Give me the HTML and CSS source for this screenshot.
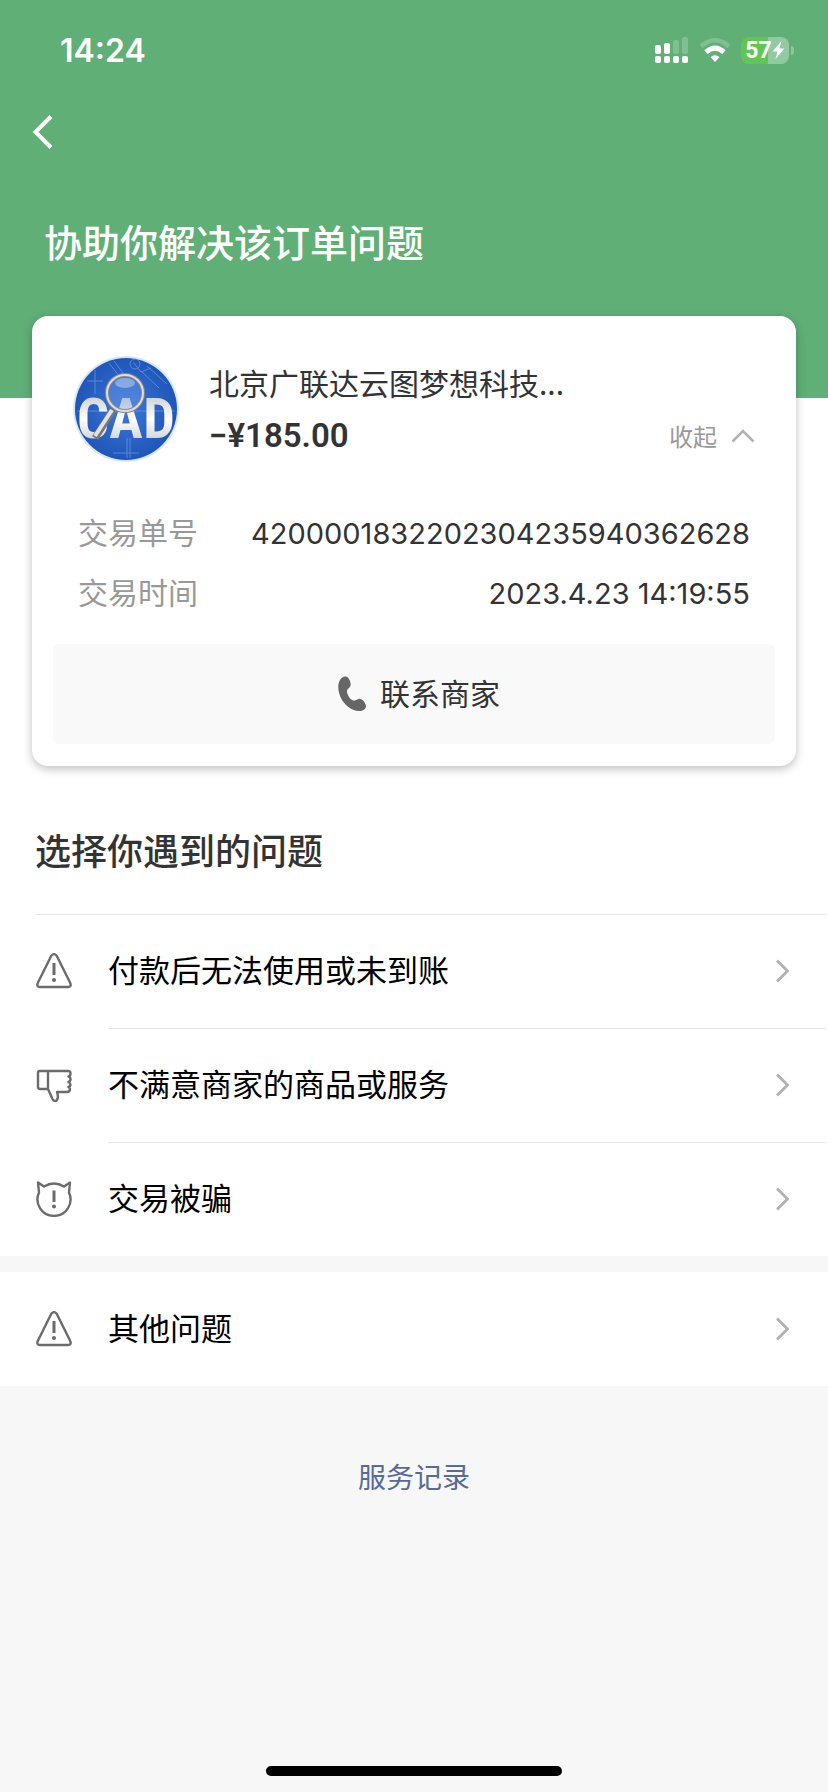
FILE: index.html
```html
<!DOCTYPE html>
<html lang="zh-CN">
<head>
    <meta charset="UTF-8">
    <meta name="viewport" content="width=device-width, initial-scale=1.0">
    <title>协助你解决该订单问题</title>
    <link rel="stylesheet" href="styles.css">
</head>
<body>
    <header class="header">
        <div class="status-bar">
            <span class="time">14:24</span>
            <div class="status-icons">
                <svg class="signal" width="34" height="27" viewBox="0 0 34 27" fill="#fff">
                    <rect x="0" y="8" width="6" height="9" rx="2"/>
                    <rect x="9" y="6" width="6" height="11" rx="2"/>
                    <rect x="18" y="3" width="6" height="14" rx="2" opacity=".2"/>
                    <rect x="27" y="0" width="6" height="17" rx="2" opacity=".2"/>
                    <rect x="0" y="19" width="6" height="7" rx="2"/>
                    <rect x="9" y="19" width="6" height="7" rx="2"/>
                    <rect x="18" y="19" width="6" height="7" rx="2"/>
                    <rect x="27" y="19" width="6" height="7" rx="2"/>
                </svg>
                <svg class="wifi" width="32" height="25" viewBox="0 0 32 25">
                    <path d="M2 8.5Q16-4 30 8.500" fill="none" stroke="#fff" stroke-width="4.500" opacity=".2"/>
                    <path d="M7 14.200Q16 6 25 14.200" fill="none" stroke="#fff" stroke-width="5"/>
                    <path d="M11.500 19Q16 15.500 20.500 19L16 24Z" fill="#fff"/>
                </svg>
                <div class="battery">
                    <span class="battery-level">57</span>
                    <svg width="13" height="18" viewBox="0 0 12 18"><path d="M9 0L0 10.500H5L3 18L12 7.500H7Z" fill="#fff"/></svg>
                </div>
            </div>
        </div>
        <button class="back" aria-label="返回">
            <svg width="22" height="36" viewBox="0 0 22 36"><path d="M19 2.500L3.500 18L19 33.500" fill="none" stroke="#fff" stroke-width="4"/></svg>
        </button>
        <h1>协助你解决该订单问题</h1>
    </header>

    <main>
        <section class="card">
            <div class="merchant">
                <svg class="avatar" width="106" height="106" viewBox="0 0 106 106">
                    <defs>
                        <linearGradient id="silver" x1="0" y1="0" x2="0" y2="1">
                            <stop offset="0" stop-color="#b9bcc1"/>
                            <stop offset=".5" stop-color="#fff"/>
                            <stop offset=".75" stop-color="#dcdddf"/>
                            <stop offset="1" stop-color="#a9a9ab"/>
                        </linearGradient>
                        <radialGradient id="blue">
                            <stop offset="0" stop-color="#3c78da"/>
                            <stop offset="1" stop-color="#1f56b8"/>
                        </radialGradient>
                    </defs>
                    <circle cx="53" cy="53" r="53" fill="#d9e7fa"/>
                    <circle cx="53" cy="53" r="51" fill="url(#blue)"/>
                    <g fill="none" stroke="#79a7ef" opacity=".6">
                        <path d="M4 55H102M40 97H66M54 82V102M57 82V102M36 7L46 20M41 5L50 17M60 6L68 16L78 12M74 10L94 28M68 15L86 32M14 25H30M22 14V38"/>
                        <circle cx="62" cy="8" r="5"/>
                    </g>
                    <g class="avatar-text" fill="url(#silver)">
                        <text x="20" y="82">C</text>
                        <text x="53" y="82">A</text>
                        <text x="86" y="82">D</text>
                    </g>
                    <path d="M40 54L22 82" stroke="#777" stroke-width="7"/>
                    <path d="M39 54L22 80" stroke="#e2e2e2" stroke-width="4"/>
                    <circle cx="52" cy="37" r="18" fill="#79a7ef" fill-opacity=".35" stroke="#888" stroke-width="4"/>
                    <circle cx="52" cy="37" r="18" fill="none" stroke="#ddd" stroke-width="2"/>
                    <ellipse cx="52" cy="27" rx="10" ry="5" fill="#fff" opacity=".35"/>
                </svg>
                <div class="merchant-info">
                    <div class="merchant-name">北京广联达云图梦想科技...</div>
                    <div class="amount-row">
                        <span class="amount">−¥185.00</span>
                        <button class="collapse">收起
                            <svg width="24" height="15" viewBox="0 0 24 15"><path d="M1.500 13.500L12 3L22.500 13.500" fill="none" stroke="#b2b2b2" stroke-width="2.500"/></svg>
                        </button>
                    </div>
                </div>
            </div>
            <dl class="details">
                <div class="detail">
                    <dt>交易单号</dt>
                    <dd>4200001832202304235940362628</dd>
                </div>
                <div class="detail">
                    <dt>交易时间</dt>
                    <dd>2023.4.23 14:19:55</dd>
                </div>
            </dl>
            <button class="contact">
                <svg width="28" height="36" viewBox="0 0 28 36"><path d="M6.500 .5C9 0 11 2 12 5C13 8 13 10 11 12C9 13.500 8.500 15 9.500 18C11 22 14 25 17 24.500C19 24 20 22.500 22 22.800C25 23.500 27.500 27 28 30C28 33 25 35 21 35C14 35 6 29 2.500 21C0 15 -.5 9 1.500 5C2.500 2.500 4.500 .8 6.500 .5Z" fill="#666"/></svg>
                <span class="contact-text">联系商家</span>
            </button>
        </section>

        <h2>选择你遇到的问题</h2>
        <nav class="issues">
            <a class="issue" href="#unpaid">
                <svg class="issue-icon" width="36" height="36" viewBox="0 0 36 36"><use href="#icon-warning"/></svg>
                <span class="issue-text">付款后无法使用或未到账</span>
                <svg class="arrow" width="13" height="24" viewBox="0 0 13 24"><use href="#icon-arrow"/></svg>
            </a>
            <a class="issue" href="#unsatisfied">
                <svg class="issue-icon" width="36" height="36" viewBox="0 0 36 36">
                    <path d="M3.500 4H32Q34.500 4 34.500 6.500Q34.500 9 32.500 9.500Q35 10.500 34.500 13Q34 14.500 32.500 15Q34.500 16 34.500 18Q34 19.500 32.500 20Q34 21 34 22Q34 25 31 25H21C22.500 29 22 34 19 34C17.500 34 17 33 16.500 32L12 22H4Q2 22 2 20V6Q2 4 3.500 4ZM12 4V22"/>
                </svg>
                <span class="issue-text">不满意商家的商品或服务</span>
                <svg class="arrow" width="13" height="24" viewBox="0 0 13 24"><use href="#icon-arrow"/></svg>
            </a>
            <a class="issue" href="#fraud">
                <svg class="issue-icon" width="36" height="36" viewBox="0 0 36 36">
                    <path d="M2 1.500L8 5.500Q18-.5 28 5.500L34 1.500L33 11.500A16.500 16.500 0 1 1 3 11.500Z"/>
                    <path d="M18 9.500V21" stroke-width="3"/>
                    <circle class="dot" cx="18" cy="25.500" r="2"/>
                </svg>
                <span class="issue-text">交易被骗</span>
                <svg class="arrow" width="13" height="24" viewBox="0 0 13 24"><use href="#icon-arrow"/></svg>
            </a>
        </nav>
        <nav class="issues issues-other">
            <a class="issue" href="#other">
                <svg class="issue-icon" width="36" height="36" viewBox="0 0 36 36"><use href="#icon-warning"/></svg>
                <span class="issue-text">其他问题</span>
                <svg class="arrow" width="13" height="24" viewBox="0 0 13 24"><use href="#icon-arrow"/></svg>
            </a>
        </nav>
    </main>

    <footer class="footer">
        <a class="records" href="#records">服务记录</a>
        <div class="home-indicator"></div>
    </footer>

    <!-- shared icons -->
    <svg class="sprite" width="0" height="0">
        <symbol id="icon-warning" viewBox="0 0 36 36">
            <path d="M15.300 2.800Q18-.5 20.700 2.800L34 29.500Q36 34 32 34H4Q0 34 2 29.500Z"/>
            <path d="M18 10V22" stroke-width="3"/>
            <circle class="dot" cx="18" cy="27" r="2"/>
        </symbol>
        <symbol id="icon-arrow" viewBox="0 0 13 24">
            <path d="M1 1.500L11.500 12L1 22.500"/>
        </symbol>
    </svg>
</body>
</html>
```

FILE: styles.css
```css
* {
    box-sizing: border-box;
}
body {
    margin: 0;
    min-height: 100vh;
    display: flex;
    flex-direction: column;
    font-family: "Noto Sans CJK SC", sans-serif;
    color: #333;
    background-color: #f7f7f7;
}
button {
    border: none;
    padding: 0;
    background: none;
    font-family: inherit;
    cursor: pointer;
}
a {
    text-decoration: none;
}
svg {
    display: block;
    flex-shrink: 0;
}
.header {
    height: 398px;
    background-color: #60af77;
    color: #fff;
}
.status-bar {
    display: flex;
    justify-content: space-between;
    align-items: center;
    height: 100px;
    padding: 0 34px 0 60px;
}
.time {
    font-family: Inter, sans-serif;
    font-size: 32px;
    font-weight: 600;
}
.status-icons {
    display: flex;
    align-items: center;
    gap: 10px;
}
.battery {
    position: relative;
    display: flex;
    align-items: center;
    justify-content: center;
    width: 48px;
    height: 27px;
    margin-right: 5px;
    border-radius: 8px;
    background: linear-gradient(to right, #61c654 57%, #91c9a0 57%);
}
.battery::after {
    content: "";
    position: absolute;
    right: -5px;
    top: 9px;
    width: 3px;
    height: 9px;
    border-radius: 0 3px 3px 0;
    background-color: #8cc69b;
}
.battery-level {
    font-family: Roboto, sans-serif;
    font-size: 23px;
    font-weight: 700;
    line-height: 27px;
}
.back {
    display: block;
    margin: 14px 0 0 32px;
}
h1 {
    margin: 63px 0 0;
    padding: 0 44px;
    font-size: 38px;
    font-weight: 500;
    line-height: 56px;
}
main {
    background-color: #fff;
}
.card {
    position: relative;
    margin: -82px 32px 0;
    padding: 40px 21px 22px;
    border-radius: 16px;
    background-color: #fff;
    box-shadow: 0 3px 10px rgba(0, 0, 0, 0.25);
}
.merchant {
    display: flex;
    gap: 30px;
    padding: 0 20px;
}
.avatar-text {
    font-family: "Roboto Condensed", "Liberation Sans Narrow", Roboto, sans-serif;
    font-size: 56px;
    font-weight: 700;
    text-anchor: middle;
}
.merchant-info {
    flex: 1;
    min-width: 0;
    padding-top: 4px;
}
.merchant-name {
    font-size: 30px;
    line-height: 44px;
}
.amount-row {
    display: flex;
    justify-content: space-between;
    align-items: center;
    height: 62px;
}
.amount {
    font-family: Roboto, sans-serif;
    font-size: 33px;
    font-weight: 600;
}
.collapse {
    display: flex;
    align-items: center;
    gap: 14px;
    font-size: 24px;
    color: #999;
}
.details {
    margin: 35px 0 23px;
    padding: 0 25px;
}
.detail {
    display: flex;
    justify-content: space-between;
    align-items: baseline;
    font-size: 30px;
    line-height: 60px;
}
.detail dt {
    color: #999;
}
.detail dd {
    margin: 0;
    font-family: Inter, sans-serif;
    font-size: 29px;
    line-height: 40px;
}
.contact {
    display: flex;
    justify-content: center;
    align-items: center;
    gap: 14px;
    width: 100%;
    height: 100px;
    padding-left: 10px;
    border-radius: 6px;
    background-color: #f9f9f9;
    font-size: 30px;
    color: #333;
}
.contact-text,
.issue-text {
    padding-bottom: 5px;
}
h2 {
    margin: 0;
    padding: 56px 35px 38px;
    font-size: 36px;
    font-weight: 500;
    line-height: 54px;
}
.issues {
    padding-left: 36px;
}
.issue {
    position: relative;
    display: flex;
    align-items: center;
    height: 114px;
    padding-right: 39px;
    color: #000;
}
.issue::before {
    content: "";
    position: absolute;
    top: 0;
    left: 72px;
    right: 2px;
    border-top: 1px solid #e6e6e6;
}
.issue:first-child::before {
    left: 0;
}
.issue-icon {
    margin-right: 36px;
    fill: none;
    stroke: #6b6b6b;
    stroke-width: 2.4;
    stroke-linejoin: round;
}
.dot {
    fill: #6b6b6b;
    stroke: none;
}
.issue-text {
    flex: 1;
    font-size: 31px;
}
.arrow {
    fill: none;
    stroke: #b2b2b2;
    stroke-width: 3;
}
.issues-other {
    border-top: 16px solid #f7f7f7;
}
.issues-other .issue::before {
    display: none;
}
.footer {
    flex: 1;
    display: flex;
    flex-direction: column;
    justify-content: space-between;
    align-items: center;
    padding: 70px 0 16px;
}
.records {
    font-size: 28px;
    line-height: 40px;
    color: #576b95;
}
.home-indicator {
    width: 296px;
    height: 10px;
    border-radius: 5px;
    background-color: #000;
}
.sprite {
    position: absolute;
}
```
